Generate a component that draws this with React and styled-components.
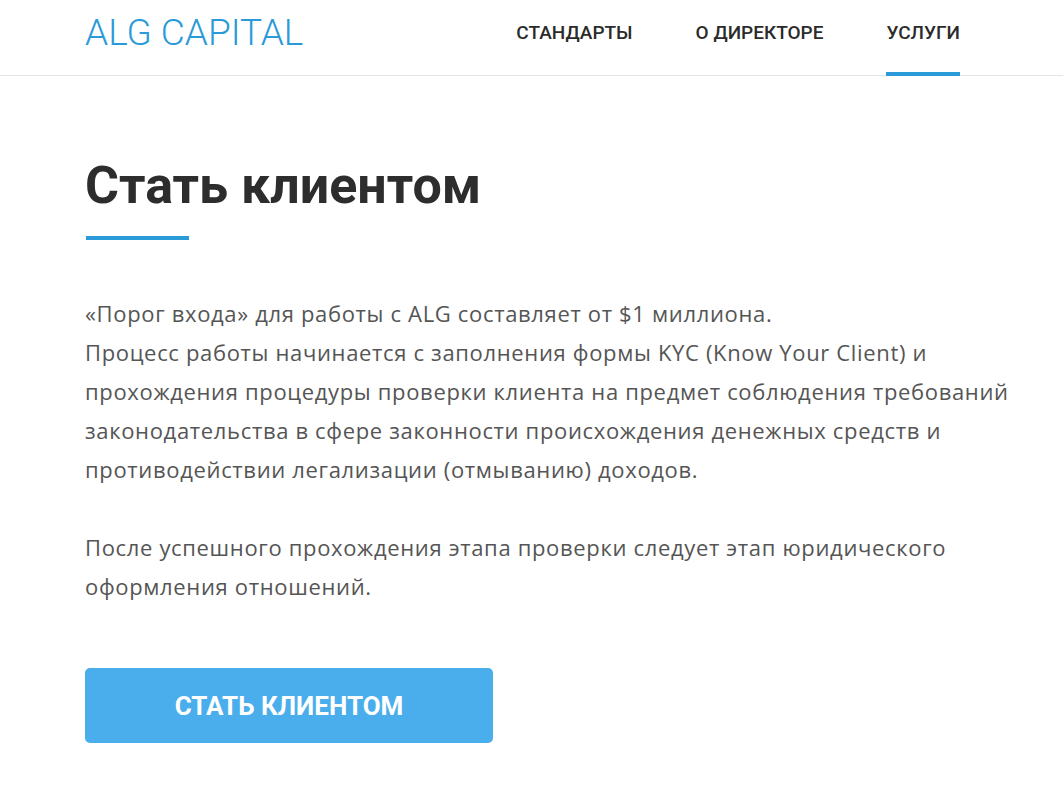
import styled, { createGlobalStyle } from "styled-components";

const GlobalStyle = createGlobalStyle`
  * { box-sizing: border-box; }
  body {
    margin: 0;
    background: #fff;
    font-family: "Open Sans", "Liberation Sans", sans-serif;
  }
`;

const Header = styled.header`
  height: 76px;
  border-bottom: 1px solid #e5e5e5;
`;

const HeaderInner = styled.div`
  height: 100%;
  padding: 0 103px 0 85px;
  display: flex;
  align-items: stretch;
  justify-content: space-between;
`;

const Logo = styled.a`
  display: flex;
  align-items: center;
  padding-bottom: 10px;
  font-family: Roboto, "Liberation Sans", sans-serif;
  font-weight: 300;
  font-size: 37px;
  color: #2a9ad8;
  text-decoration: none;
`;

const Nav = styled.nav`
  display: flex;
  gap: 63px;
`;

const NavItem = styled.a`
  display: flex;
  align-items: center;
  padding-bottom: 8px;
  font-family: Roboto, "Liberation Sans", sans-serif;
  font-weight: 500;
  font-size: 19px;
  color: #2b2b2b;
  text-decoration: none;
  border-bottom: 4px solid ${(p) => (p.$active ? "#2a9ad8" : "transparent")};
  margin-bottom: -1px;
`;

const Main = styled.main`
  padding: 79px 40px 48px 85px;
`;

const Title = styled.h1`
  margin: 0;
  font-family: Roboto, "Liberation Sans", sans-serif;
  font-weight: 700;
  font-size: 52px;
  line-height: 62px;
  color: #2d2d2d;
`;

const TitleBar = styled.div`
  width: 103px;
  height: 4px;
  margin: 19px 0 0 1px;
  background: #2a9ad8;
`;

const Text = styled.p`
  margin: ${(p) => (p.$first ? "54px" : "39px")} 0 0;
  font-weight: 400;
  font-size: 22px;
  letter-spacing: 0.66px;
  line-height: 39px;
  color: #555;
`;

const Button = styled.button`
  display: block;
  margin-top: 62px;
  width: 408px;
  height: 75px;
  border: none;
  border-radius: 5px;
  background: #4aaeec;
  color: #fff;
  font-family: Roboto, "Liberation Sans", sans-serif;
  font-weight: 700;
  font-size: 26px;
  cursor: pointer;
`;

const App = () => {
  return (
    <>
      <GlobalStyle />
      <Header>
        <HeaderInner>
          <Logo href="#">ALG CAPITAL</Logo>
          <Nav>
            <NavItem href="#">СТАНДАРТЫ</NavItem>
            <NavItem href="#">О ДИРЕКТОРЕ</NavItem>
            <NavItem href="#" $active>
              УСЛУГИ
            </NavItem>
          </Nav>
        </HeaderInner>
      </Header>
      <Main>
        <Title>Стать клиентом</Title>
        <TitleBar />
        <Text $first>
          «Порог входа» для работы с ALG составляет от $1 миллиона.
          <br />
          Процесс работы начинается с заполнения формы KYC (Know Your Client) и
          прохождения процедуры проверки клиента на предмет соблюдения
          требований законодательства в сфере законности происхождения денежных
          средств и противодействии легализации (отмыванию) доходов.
        </Text>
        <Text>
          После успешного прохождения этапа проверки следует этап юридического
          оформления отношений.
        </Text>
        <Button>СТАТЬ КЛИЕНТОМ</Button>
      </Main>
    </>
  );
};

export default App;
